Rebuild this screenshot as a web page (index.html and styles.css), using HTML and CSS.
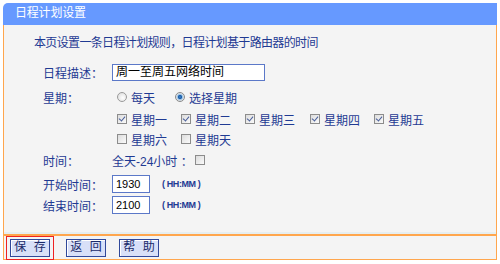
FILE: index.html
```html
<!DOCTYPE html>
<html>
<head>
<meta charset="utf-8">
<link rel="stylesheet" href="styles.css">
</head>
<body>
<div class="panel">
  <div class="head">日程计划设置</div>
  <div class="content">
    <div class="intro">本页设置一条日程计划规则，日程计划基于路由器的时间</div>
    <div class="row r-desc">
      <span class="lbl">日程描述：</span>
      <span class="val"><span class="field wide">周一至周五网络时间</span></span>
    </div>
    <div class="row r-week">
      <span class="lbl">星期：</span>
      <span class="val opts">
        <span class="opt o1"><span class="radio"></span>每天</span>
        <span class="opt"><span class="radio on"></span>选择星期</span>
      </span>
    </div>
    <div class="row r-days1">
      <span class="lbl"></span>
      <span class="val days">
        <span class="opt"><span class="cb on"></span>星期一</span>
        <span class="opt"><span class="cb on"></span>星期二</span>
        <span class="opt"><span class="cb on"></span>星期三</span>
        <span class="opt"><span class="cb on"></span>星期四</span>
        <span class="opt"><span class="cb on"></span>星期五</span>
      </span>
    </div>
    <div class="row r-days2">
      <span class="lbl"></span>
      <span class="val days">
        <span class="opt"><span class="cb"></span>星期六</span>
        <span class="opt"><span class="cb"></span>星期天</span>
      </span>
    </div>
    <div class="row r-time">
      <span class="lbl">时间：</span>
      <span class="val allday">全天-24小时 ：<span class="cb"></span></span>
    </div>
    <div class="row r-start">
      <span class="lbl">开始时间：</span>
      <span class="val"><span class="field short">1930</span><span class="hint">( HH:MM )</span></span>
    </div>
    <div class="row r-end">
      <span class="lbl">结束时间：</span>
      <span class="val"><span class="field short">2100</span><span class="hint">( HH:MM )</span></span>
    </div>
  </div>
  <div class="foot">
    <span class="focus"><span class="btn">保 存</span></span>
    <span class="btn">返 回</span>
    <span class="btn">帮 助</span>
  </div>
</div>
</body>
</html>
```
FILE: styles.css
```css
html, body {
  margin: 0;
  padding: 0;
  background: #ffffff;
}
body {
  font-family: "Liberation Sans", "Noto Sans CJK SC", sans-serif;
  font-size: 12px;
  color: #1f3a93;
}
.panel {
  margin: 3px 3px 0 3px;
  width: 494px;
}
.head {
  height: 22px;
  line-height: 21px;
  background: #6699ff;
  color: #ffffff;
  padding-left: 12px;
  border-top-left-radius: 5px;
  font-size: 12px;
  letter-spacing: -0.2px;
}
.content {
  background: #f4f4f4;
  border-left: 1px solid #ffa64d;
  border-right: 1px solid #ffa64d;
  height: 209px;
  padding-top: 10px;
  box-sizing: border-box;
  box-shadow: inset 0 -2px 0 #e6eef0;
}
.intro {
  height: 16px;
  line-height: 16px;
  padding-left: 30px;
  letter-spacing: -0.65px;
}
.row {
  display: flex;
  align-items: center;
  height: 20px;
  padding-left: 39px;
}
.lbl {
  width: 69px;
  flex: none;
}
.val {
  display: flex;
  align-items: center;
}
.r-desc { margin-top: 11px; }
.r-week { margin-top: 5px; }
.r-days1 { margin-top: 2px; }
.r-days2 { margin-top: 0; }
.r-time { margin-top: 1px; }
.r-start { margin-top: 4px; }
.r-end { margin-top: 1px; }

.field {
  box-sizing: border-box;
  height: 17px;
  line-height: 15px;
  border: 1px solid #5b78c8;
  background: #ffffff;
  color: #000000;
  padding-left: 3px;
}
.wide { width: 153px; }
.short {
  width: 38px;
  height: 18px;
  line-height: 16px;
  font-size: 11px;
}
.hint {
  margin-left: 12px;
  font-size: 9px;
  font-weight: bold;
  letter-spacing: -0.4px;
  color: #1f3a93;
}
.opts { padding-left: 5px; }
.opt {
  display: flex;
  align-items: center;
}
.o1 { width: 58px; }
.radio {
  width: 10px;
  height: 10px;
  border-radius: 50%;
  box-sizing: border-box;
  border: 1px solid #9a9a9a;
  background: radial-gradient(circle at 60% 60%, #ffffff 0, #e4e4e4 70%);
  margin-right: 4px;
}
.radio.on {
  background: radial-gradient(circle at 50% 50%, #3a80c8 0, #1c5ea8 30%, #9ec4e6 45%, #e8e8e8 70%);
  border-color: #8a8a8a;
}
.days {
  padding-left: 5px;
  display: grid;
  grid-template-columns: 64px 64px 65px 64px 64px;
}
.cb {
  position: relative;
  width: 10px;
  height: 10px;
  box-sizing: border-box;
  border: 1px solid #8c8c8c;
  background: linear-gradient(135deg, #dcdcdc, #fafafa);
  margin-right: 4px;
  flex: none;
}
.cb.on::after {
  content: "";
  position: absolute;
  left: 2px;
  top: 0px;
  width: 3px;
  height: 5px;
  border-right: 1.5px solid #4a5f9a;
  border-bottom: 1.5px solid #4a5f9a;
  transform: rotate(40deg);
}
.allday .cb { margin-left: 2px; }

.foot {
  height: 23px;
  background: #f4f4f4;
  border: 1px solid #ffa64d;
  border-width: 2px 1px 1px 1px;
  display: flex;
  align-items: center;
  gap: 13px;
  padding-left: 3px;
  box-sizing: content-box;
}
.focus {
  display: flex;
  outline: 1px solid #ee2222;
  padding: 2px 3px 2px 3px;
}
.btn {
  box-sizing: border-box;
  width: 40px;
  height: 18px;
  line-height: 15px;
  text-align: center;
  background: #d8e0f8;
  border: 1px solid #30489a;
  box-shadow: inset 1px 1px 0 #ffffff;
  color: #1a2a6a;
  letter-spacing: 2px;
  padding-left: 2px;
}
```
